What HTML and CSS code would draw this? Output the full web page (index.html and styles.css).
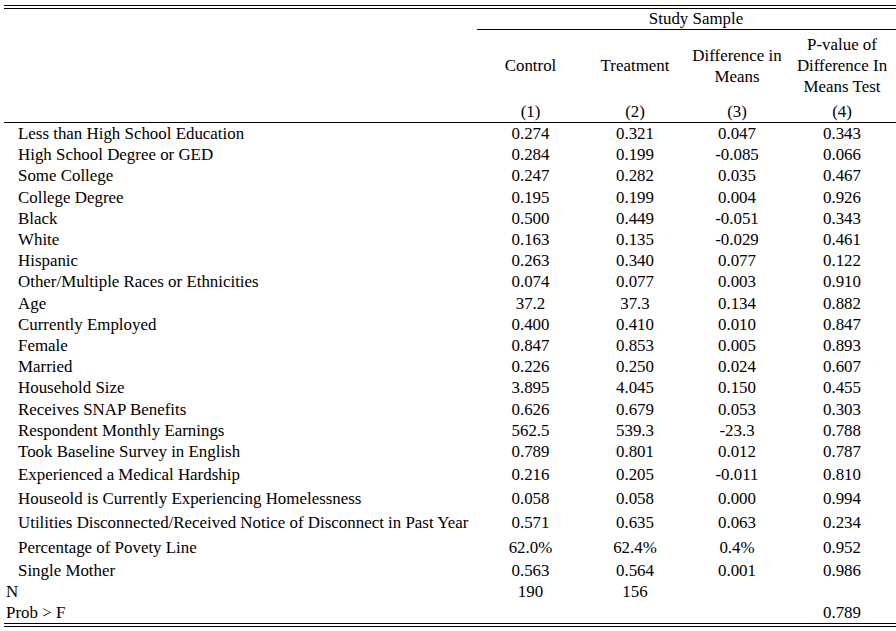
FILE: index.html
```html
<!DOCTYPE html>
<html lang="en">
<head>
<meta charset="utf-8">
<title>Study Sample Balance Table</title>
<link rel="stylesheet" href="styles.css">
</head>
<body>
<div class="sheet">
  <div class="double"></div>
  <div class="span-row">
    <div></div>
    <div class="span-cell">Study Sample</div>
  </div>
  <div class="head">
    <div></div>
    <div class="hcell">Control</div>
    <div class="hcell">Treatment</div>
    <div class="hcell">Difference in<br>Means</div>
    <div class="hcell">P-value of<br>Difference In<br>Means Test</div>
  </div>
  <div class="nums">
    <div></div>
    <div>(1)</div>
    <div>(2)</div>
    <div>(3)</div>
    <div>(4)</div>
  </div>
  <div class="body">
    <div class="row"><div class="lab">Less than High School Education</div><div>0.274</div><div>0.321</div><div>0.047</div><div>0.343</div></div>
    <div class="row"><div class="lab">High School Degree or GED</div><div>0.284</div><div>0.199</div><div>-0.085</div><div>0.066</div></div>
    <div class="row"><div class="lab">Some College</div><div>0.247</div><div>0.282</div><div>0.035</div><div>0.467</div></div>
    <div class="row"><div class="lab">College Degree</div><div>0.195</div><div>0.199</div><div>0.004</div><div>0.926</div></div>
    <div class="row"><div class="lab">Black</div><div>0.500</div><div>0.449</div><div>-0.051</div><div>0.343</div></div>
    <div class="row"><div class="lab">White</div><div>0.163</div><div>0.135</div><div>-0.029</div><div>0.461</div></div>
    <div class="row"><div class="lab">Hispanic</div><div>0.263</div><div>0.340</div><div>0.077</div><div>0.122</div></div>
    <div class="row"><div class="lab">Other/Multiple Races or Ethnicities</div><div>0.074</div><div>0.077</div><div>0.003</div><div>0.910</div></div>
    <div class="row"><div class="lab">Age</div><div>37.2</div><div>37.3</div><div>0.134</div><div>0.882</div></div>
    <div class="row"><div class="lab">Currently Employed</div><div>0.400</div><div>0.410</div><div>0.010</div><div>0.847</div></div>
    <div class="row"><div class="lab">Female</div><div>0.847</div><div>0.853</div><div>0.005</div><div>0.893</div></div>
    <div class="row"><div class="lab">Married</div><div>0.226</div><div>0.250</div><div>0.024</div><div>0.607</div></div>
    <div class="row"><div class="lab">Household Size</div><div>3.895</div><div>4.045</div><div>0.150</div><div>0.455</div></div>
    <div class="row"><div class="lab">Receives SNAP Benefits</div><div>0.626</div><div>0.679</div><div>0.053</div><div>0.303</div></div>
    <div class="row"><div class="lab">Respondent Monthly Earnings</div><div>562.5</div><div>539.3</div><div>-23.3</div><div>0.788</div></div>
    <div class="row"><div class="lab">Took Baseline Survey in English</div><div>0.789</div><div>0.801</div><div>0.012</div><div>0.787</div></div>
    <div class="row tall"><div class="lab">Experienced a Medical Hardship</div><div>0.216</div><div>0.205</div><div>-0.011</div><div>0.810</div></div>
    <div class="row taller"><div class="lab">Houseold is Currently Experiencing Homelessness</div><div>0.058</div><div>0.058</div><div>0.000</div><div>0.994</div></div>
    <div class="row taller"><div class="lab">Utilities Disconnected/Received Notice of Disconnect in Past Year</div><div>0.571</div><div>0.635</div><div>0.063</div><div>0.234</div></div>
    <div class="row tall"><div class="lab">Percentage of Povety Line</div><div>62.0%</div><div>62.4%</div><div>0.4%</div><div>0.952</div></div>
    <div class="row mid"><div class="lab">Single Mother</div><div>0.563</div><div>0.564</div><div>0.001</div><div>0.986</div></div>
    <div class="row plain"><div class="lab flush">N</div><div>190</div><div>156</div><div></div><div></div></div>
    <div class="row plain"><div class="lab flush">Prob &gt; F</div><div></div><div></div><div></div><div>0.789</div></div>
  </div>
  <div class="double"></div>
</div>
</body>
</html>
```
FILE: styles.css
```css
html, body {
  margin: 0;
  padding: 0;
  background: #ffffff;
  overflow: hidden;
}

.sheet {
  margin: 5px 0 0 4px;
  width: 892px;
  font-family: "Liberation Serif", "Times New Roman", serif;
  font-size: 16.9px;
  color: #000000;
}

.double {
  height: 2px;
  border-top: 1px solid #000000;
  border-bottom: 1px solid #000000;
}

.span-row {
  display: grid;
  grid-template-columns: 473px 1fr;
  height: 21px;
}

.span-cell {
  border-bottom: 1px solid #000000;
  line-height: 20px;
  height: 20px;
  text-align: center;
  padding-left: 19px;
}

.head,
.nums,
.row {
  display: grid;
  grid-template-columns: 473px 107px 102px 102px 108px;
}

.head {
  padding-top: 4px;
}

.hcell {
  height: 63px;
  line-height: 21px;
  display: flex;
  align-items: center;
  justify-content: center;
  text-align: center;
}

.nums {
  margin-top: 4px;
  height: 21px;
  line-height: 21px;
  text-align: center;
  border-bottom: 1px solid #000000;
}

.row {
  height: 21.2px;
  line-height: 21px;
  align-items: center;
  text-align: center;
}

.row.tall {
  height: 24px;
}

.row.taller {
  height: 24.5px;
}

.row.mid {
  height: 22px;
}

.row.plain {
  height: 21px;
}

.lab {
  text-align: left;
  padding-left: 14px;
  white-space: nowrap;
}

.lab.flush {
  padding-left: 2px;
}
```
